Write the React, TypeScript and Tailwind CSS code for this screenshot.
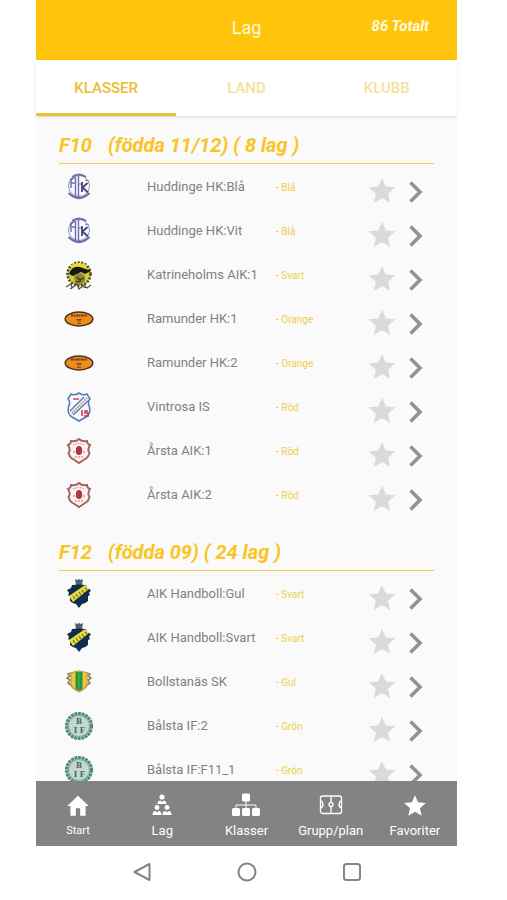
import React, { useState } from 'react';

type Crest = 'huddinge' | 'katrineholm' | 'ramunder' | 'vintrosa' | 'arsta' | 'aik' | 'bollstanas' | 'balsta';

interface Team {
  name: string;
  level: string;
  crest: Crest;
}

interface Group {
  title: string;
  detail: string;
  teams: Team[];
}

const groups: Group[] = [
  {
    title: 'F10',
    detail: '(födda 11/12) ( 8 lag )',
    teams: [
      { name: 'Huddinge HK:Blå', level: 'Blå', crest: 'huddinge' },
      { name: 'Huddinge HK:Vit', level: 'Blå', crest: 'huddinge' },
      { name: 'Katrineholms AIK:1', level: 'Svart', crest: 'katrineholm' },
      { name: 'Ramunder HK:1', level: 'Orange', crest: 'ramunder' },
      { name: 'Ramunder HK:2', level: 'Orange', crest: 'ramunder' },
      { name: 'Vintrosa IS', level: 'Röd', crest: 'vintrosa' },
      { name: 'Årsta AIK:1', level: 'Röd', crest: 'arsta' },
      { name: 'Årsta AIK:2', level: 'Röd', crest: 'arsta' },
    ],
  },
  {
    title: 'F12',
    detail: '(födda 09) ( 24 lag )',
    teams: [
      { name: 'AIK Handboll:Gul', level: 'Svart', crest: 'aik' },
      { name: 'AIK Handboll:Svart', level: 'Svart', crest: 'aik' },
      { name: 'Bollstanäs SK', level: 'Gul', crest: 'bollstanas' },
      { name: 'Bålsta IF:2', level: 'Grön', crest: 'balsta' },
      { name: 'Bålsta IF:F11_1', level: 'Grön', crest: 'balsta' },
    ],
  },
];

const crests: Record<Crest, React.ReactNode> = {
  huddinge: (
    <g fill="none" stroke="#6e6fa8">
      <circle cx="16" cy="15" r="10.5" strokeWidth="1" stroke="#9495bf" />
      <path d="M9 6Q16 1 23 6" strokeWidth="2" />
      <path d="M5.5 22Q16 32 26.5 22" strokeWidth="2.2" />
      <path d="M8 7v10M8 12h4M12.5 6v20M15.5 4v22" strokeWidth="1.4" />
      <path d="M7 10l5-4M16 13h3" strokeWidth="1.2" />
      <path d="M19 11v10M24.5 12l-5 4.500 5.500 5" stroke="#414478" strokeWidth="1.8" />
      <path d="M22 9l4 1" strokeWidth="1" />
    </g>
  ),
  katrineholm: (
    <g>
      <circle cx="16" cy="15" r="11.5" fill="#d2cb3e" />
      <circle cx="16" cy="15" r="11.5" fill="none" stroke="#4b4a1c" strokeWidth="2.5" strokeDasharray="2 1.5" />
      <path d="M8 6Q16 2 24 6L22 10Q15 6 9 10z" fill="#e5dc3b" />
      <path d="M6 15Q9 6 17 8L28 12 22 15 18 13 10 17z" fill="#171711" />
      <path d="M11 16l7-2 4 3v5l-4 4-6-1z" fill="#8b883a" />
      <path d="M14 18l3 3 4-2M13 23l5-1" fill="none" stroke="#33321a" strokeWidth="1.2" />
      <path d="M3 28l5-3 1 4 5-4 2 5 5-4 3 3 4-3M7 30l3-2M20 28l5 1" fill="none" stroke="#55534a" strokeWidth="1.2" />
    </g>
  ),
  ramunder: (
    <g>
      <ellipse cx="16" cy="16" rx="13.8" ry="7" fill="#ee8c1e" stroke="#46331f" strokeWidth="1.5" />
      <path d="M8 12.5h16" stroke="#6d431a" strokeWidth="2.2" strokeDasharray="2 .5" />
      <path d="M13.5 16.5h5M14 18h4M14 20.5h4" stroke="#7a4716" strokeWidth="1" />
    </g>
  ),
  vintrosa: (
    <g>
      <path
        d="M8 3Q12 5 16 2Q20 5 24 3L27 8Q24 11 26.500 16Q28 23 23 26L16 30L9 26Q4 23 5.500 16Q8 11 5 8z"
        fill="#f8fafd"
        stroke="#5680b6"
        strokeWidth="1.6"
      />
      <path d="M7 20L21 6M10 24L26 9" stroke="#5680b6" strokeWidth="1.5" />
      <path d="M9 22L24 7" stroke="#d1798a" strokeWidth="2" strokeDasharray="1.5 1" />
      <path d="M10 8h6" stroke="#d2415a" strokeWidth="1.5" />
      <path d="M19 19v6M25 20h-3v2h3v3h-4" fill="none" stroke="#cf354e" strokeWidth="1.6" />
    </g>
  ),
  arsta: (
    <g>
      <path
        d="M8 6Q13 7 16 4Q19 7 24 6Q24 9 27 10Q24 15 26.500 18Q25 23 22 24L16 28L10 24Q7 23 5.500 18Q8 15 5 10Q8 9 8 6z"
        fill="#fbf6f2"
        stroke="#a95f66"
        strokeWidth="1.9"
      />
      <path d="M10 10l6-2 6 2" fill="none" stroke="#d6aaa2" strokeWidth="1.5" strokeDasharray="1.5 1" />
      <ellipse cx="16" cy="15.5" rx="3.2" ry="4.5" fill="#b53345" />
      <path d="M10 17h2M20 17h2M12 22h8" stroke="#c79a91" strokeWidth="1.5" strokeDasharray="2 1" />
    </g>
  ),
  aik: (
    <g>
      <path d="M12 1l2 1 2-1 2 1 2-1-1 6h-6z" fill="#555e69" />
      <path
        d="M9 7q7-1 14 0l1 3 4 2-2 3 1 2-2 1v5q-3 3-6 3l-3 4-3-4q-3 0-6-3v-5l-2-1 1-2-2-3 4-2z"
        fill="#102e4b"
      />
      <path d="M6 18L22 7l4 4L10 24z" fill="#e8db3f" />
      <path d="M10 18l2 3M13 16l2 3M16 14l2 3M19 12l2 3M22 10l2 2" stroke="#716f25" strokeWidth="1.2" />
    </g>
  ),
  bollstanas: (
    <g>
      <path
        d="M8 7l-3 1 2 2-3 2 3 2-2 3 3 2 2 3M24 7l3 1-2 2 3 2-3 2 2 3-3 2-2 3"
        fill="none"
        stroke="#a07b4d"
        strokeWidth="1.6"
      />
      <path d="M8 7Q16 3 24 7V19Q22 24 16 26Q10 24 8 19z" fill="#edc63d" stroke="#ad9647" strokeWidth="1" />
      <path d="M12.5 6h7v17L16 25l-3.5-2z" fill="#289445" />
      <path d="M16 6v18" stroke="#5fae42" strokeWidth="1" />
    </g>
  ),
  balsta: (
    <g>
      <circle cx="16" cy="16" r="13" fill="#c4d8d0" />
      <circle cx="16" cy="16" r="12.5" fill="none" stroke="#4f8c74" strokeWidth="3.2" strokeDasharray="2.8 .8" />
      <circle cx="16" cy="16" r="10.5" fill="none" stroke="#81ac9b" strokeWidth="1" />
      <g fill="#46665d" fontFamily="Liberation Serif, serif" fontSize="9" fontWeight="700" textAnchor="middle">
        <text x="16" y="14">B</text>
        <text x="12.5" y="22.5">I</text>
        <text x="19.5" y="22.5">F</text>
      </g>
    </g>
  ),
};

const HomeIcon = () => (
  <svg viewBox="0 0 24 24" className="size-[26px]" fill="currentColor">
    <path d="M10 21v-7h4v7h5v-9h3L12 2.500 2 12h3v9z" />
  </svg>
);

const PeopleIcon = () => (
  <svg viewBox="0 0 26 26" className="size-[26px]" fill="currentColor">
    <circle cx="13" cy="4" r="2.6" />
    <path d="M8.500 11q0-3.500 3-3.500L13 9l1.500-1.500q3 0 3 3.500z" />
    <circle cx="8" cy="14.500" r="2.4" />
    <path d="M3.500 22q0-4 3-4L8 19.500 9.500 18q3 0 3 4z" />
    <circle cx="18" cy="14.500" r="2.4" />
    <path d="M13.500 22q0-4 3-4l1.500 1.500 1.500-1.500q3 0 3 4z" />
  </svg>
);

const TreeIcon = () => (
  <svg viewBox="0 0 28 26" className="h-[26px] w-7" fill="currentColor">
    <rect x="10" y="0.500" width="8" height="8" rx="1.5" />
    <path d="M14 8v8M4 16v-4h20v4" fill="none" stroke="currentColor" strokeWidth="1" />
    <rect x="0" y="15" width="8" height="8" rx="1.5" />
    <rect x="10" y="15" width="8" height="8" rx="1.5" />
    <rect x="20" y="15" width="8" height="8" rx="1.5" />
  </svg>
);

const CourtIcon = () => (
  <svg viewBox="0 0 26 26" className="size-[26px]" fill="none" stroke="currentColor" strokeWidth="1.3">
    <rect x="2.500" y="3" width="21" height="17.500" rx="2" />
    <path d="M13 3v6.500M13 13.500v7M2.500 8.500H4q2 3 0 6H2.500M23.500 8.500H22q-2 3 0 6h1.500" />
    <circle cx="13" cy="11.500" r="2" />
  </svg>
);

const StarIcon = ({ className }: { className: string }) => (
  <svg viewBox="0 0 24 24" className={className} fill="currentColor">
    <path d="M12 17.270L18.180 21l-1.640-7.030L22 9.240l-7.190-.61L12 2 9.190 8.630 2 9.240l5.460 4.730L5.820 21z" />
  </svg>
);

const navItems = [
  { label: 'Start', size: 'text-[11px]', icon: <HomeIcon /> },
  { label: 'Lag', size: 'text-[13px]', icon: <PeopleIcon /> },
  { label: 'Klasser', size: 'text-[13px]', icon: <TreeIcon /> },
  { label: 'Grupp/plan', size: 'text-[13px]', icon: <CourtIcon /> },
  { label: 'Favoriter', size: 'text-[13px]', icon: <StarIcon className="size-[26px]" /> },
];

const TeamRow: React.FC<{ team: Team }> = ({ team }) => (
  <li className="flex h-11 items-center">
    <svg viewBox="0 0 32 32" className="ml-1 size-8 shrink-0">
      {crests[team.crest]}
    </svg>
    <span className="ml-[52px] w-[129px] shrink-0 whitespace-nowrap text-[13px] text-[#818181]">{team.name}</span>
    <span className="flex-1 text-[10px] text-[#ecd04a]">- {team.level}</span>
    <button aria-label={`Favorit ${team.name}`} className="mt-2 text-[#dadada]">
      <StarIcon className="size-8" />
    </button>
    <a href="#" aria-label={`Visa ${team.name}`} className="mx-1.5 mt-2.5 p-1 text-[#929292]">
      <svg viewBox="0 0 16 24" className="h-6 w-4" fill="none" stroke="currentColor" strokeWidth="3.6">
        <path d="M2.500 2.500L12 12l-9.500 9.500" />
      </svg>
    </a>
  </li>
);

const App: React.FC = () => {
  const [activeTab, setActiveTab] = useState('KLASSER');

  return (
    <div className="flex h-screen flex-col bg-white pl-9 pr-[50px] font-[Roboto,sans-serif]">
      <header className="relative z-10 grid h-[60px] shrink-0 grid-cols-3 items-center bg-[#ffc40c] px-7 text-[#fff8dc]">
        <h1 className="col-start-2 mb-1 text-center text-lg">Lag</h1>
        <span className="mb-2 text-right text-[15px] font-bold italic">86 Totalt</span>
      </header>

      {/* Tabs */}
      <div role="tablist" className="relative z-10 grid h-14 shrink-0 grid-cols-3 bg-white shadow-sm">
        {['KLASSER', 'LAND', 'KLUBB'].map((tab) => (
          <button
            key={tab}
            role="tab"
            aria-selected={activeTab === tab}
            onClick={() => setActiveTab(tab)}
            className={`border-b-[3px] pt-1 text-[15px] font-medium ${
              activeTab === tab ? 'border-[#eac33c] text-[#eabd2e]' : 'border-transparent text-[#f5e29a]'
            }`}
          >
            {tab}
          </button>
        ))}
      </div>

      {/* Team list */}
      <main className="min-h-0 flex-1 space-y-1.5 overflow-hidden bg-[#fafafa] px-[23px]">
        {groups.map((group) => (
          <section key={group.title}>
            <h2 className="mb-px flex h-12 items-end gap-4 border-b border-[#f0cf55] pb-1 text-xl font-bold italic text-[#fac422]">
              <span>{group.title}</span>
              <span>{group.detail}</span>
            </h2>
            <ul>
              {group.teams.map((team) => (
                <TeamRow key={team.name} team={team} />
              ))}
            </ul>
          </section>
        ))}
      </main>

      {/* Bottom navigation */}
      <nav className="grid h-[65px] shrink-0 grid-cols-5 bg-[#838383] text-white">
        {navItems.map((item) => (
          <a key={item.label} href="#" className="flex flex-col items-center gap-0.5 pt-3">
            {item.icon}
            <span className={`leading-5 ${item.size}`}>{item.label}</span>
          </a>
        ))}
      </nav>

      {/* System buttons */}
      <div className="grid h-[54px] shrink-0 grid-cols-3 items-center justify-items-center px-[53px] pb-0.5 text-[#858585]">
        <button aria-label="Tillbaka">
          <svg viewBox="0 0 20 20" className="size-5" fill="none" stroke="currentColor" strokeWidth="2" strokeLinejoin="round">
            <path d="M17.500 2v16L2.500 10z" />
          </svg>
        </button>
        <button aria-label="Hem">
          <svg viewBox="0 0 20 20" className="size-5" fill="none" stroke="currentColor" strokeWidth="2">
            <circle cx="10" cy="10" r="8.5" />
          </svg>
        </button>
        <button aria-label="Översikt">
          <svg viewBox="0 0 20 20" className="size-5" fill="none" stroke="currentColor" strokeWidth="2">
            <rect x="2" y="2" width="16" height="16" rx="2.5" />
          </svg>
        </button>
      </div>
    </div>
  );
};

export default App;
